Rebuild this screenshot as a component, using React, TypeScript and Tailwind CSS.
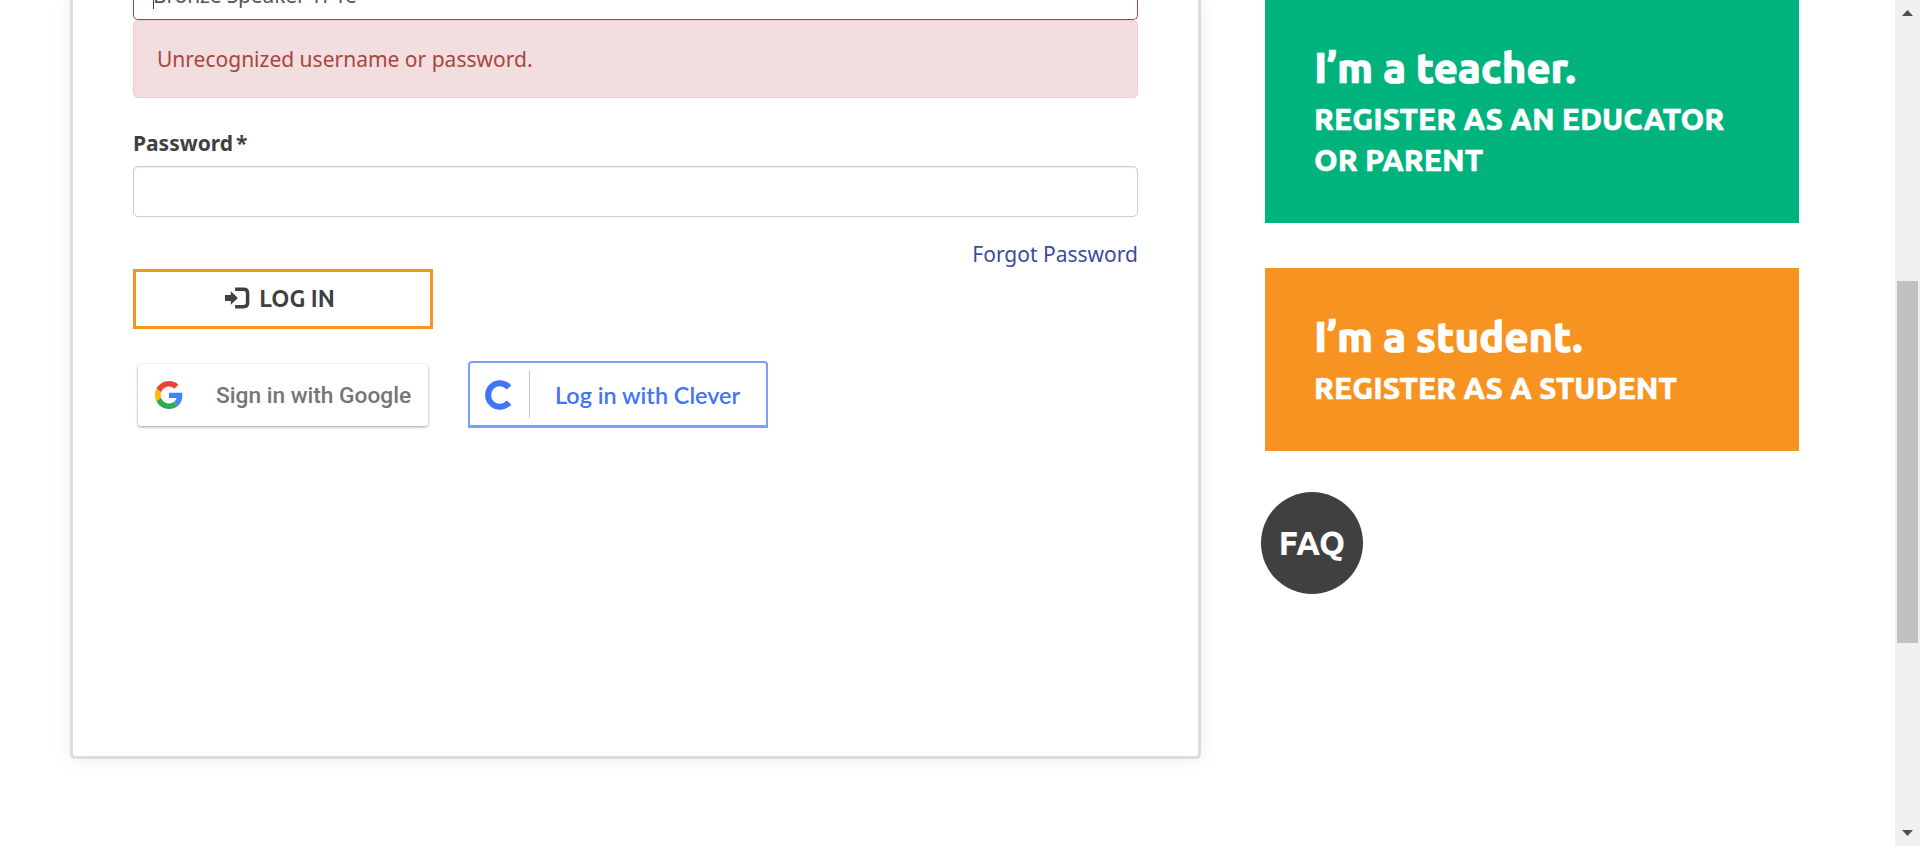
import React from "react";

const ubuntu = "font-['Ubuntu','Noto_Sans',sans-serif]";

function Title({ children }: { children: React.ReactNode }) {
  return <div className="h-[56px] text-[42px] leading-[52px] tracking-[-0.200px] whitespace-nowrap [-webkit-text-stroke:0.7px_white]">{children}</div>;
}

function Line({ children }: { children: React.ReactNode }) {
  return <div className="h-[41px] text-[30px] leading-[42px] whitespace-nowrap [-webkit-text-stroke:0.4px_white]">{children}</div>;
}

function LoginIcon() {
  return (
    <svg width="25" height="22" viewBox="0 0 26 22" className="mr-[9px] mb-[2px]">
      <path d="M0 8h6V4l7.500 7-7.500 7v-4H0z" fill="#404040" />
      <path d="M10.500 2h9q4 0 4 4v10q0 4-4 4h-9" fill="none" stroke="#404040" strokeWidth="3.600" />
    </svg>
  );
}

function GoogleIcon() {
  return (
    <svg width="28" height="28" viewBox="0 0 48 48">
      <path fill="#EA4335" d="M24 9.500c3.540 0 6.710 1.220 9.210 3.600l6.850-6.850C35.900 2.380 30.470 0 24 0 14.620 0 6.510 5.380 2.560 13.220l7.980 6.190C12.430 13.720 17.740 9.500 24 9.500z" />
      <path fill="#4285F4" d="M46.980 24.550c0-1.570-.15-3.090-.38-4.550H24v9.020h12.940c-.58 2.960-2.260 5.480-4.780 7.180l7.730 6c4.510-4.180 7.090-10.360 7.090-17.650z" />
      <path fill="#FBBC05" d="M10.530 28.590c-.48-1.450-.76-2.990-.76-4.590s.27-3.140.76-4.590l-7.980-6.190C.92 16.460 0 20.120 0 24c0 3.880.92 7.540 2.560 10.780l7.970-6.190z" />
      <path fill="#34A853" d="M24 48c6.480 0 11.930-2.130 15.890-5.810l-7.730-6c-2.150 1.450-4.920 2.300-8.160 2.300-6.260 0-11.570-4.220-13.470-9.910l-7.980 6.190C6.510 42.620 14.620 48 24 48z" />
    </svg>
  );
}

export default function App() {
  return (
    <div className="flex h-[846px] w-[1920px] overflow-hidden bg-white font-['Noto_Sans',sans-serif] text-[21px] text-[#404040]">
      <main className="flex h-full w-[1895px] items-start pl-[70px]">
        <section className="h-[759px] w-[1131px] shrink-0 rounded-b-[5px] border-[3px] border-t-0 border-[#dcdcdc] px-[60px] shadow-[0_0_20px_rgba(0,0,0,0.08)]">
          <div className="flex h-[20px] items-end overflow-hidden rounded-b-[5px] border border-t-0 border-[#a94442] pl-[19px]">
            <div className="mb-[10px] h-[30px] w-px bg-[#404040]" />
            <div className="mb-[9px] -ml-[1px] h-[30px] leading-[30px] tracking-[-0.150px] whitespace-pre text-[#555]">Bronze Speaker TPTe</div>
          </div>
          <div className="flex h-[78px] items-center rounded-[5px] border border-[#ebccd1] bg-[#f2dede] pt-[2px] pl-[23px] text-[#a94442]">
            Unrecognized username or password.
          </div>
          <label className="mt-[30px] block h-[38px] leading-[30px] font-bold">
            Password<span className="ml-[3px]">*</span>
          </label>
          <div className="h-[51px] rounded-[5px] border border-[#ccc] shadow-[inset_0_1px_1px_rgba(0,0,0,0.075)]" />
          <a className="mt-[22px] block h-[30px] text-right leading-[30px] text-[#3f4a9a]">Forgot Password</a>
          <button className={`${ubuntu} flex h-[60px] w-[300px] items-center justify-center border-[3px] border-[#f79320] pr-[6px] text-[23px] font-bold`}>
            <LoginIcon />
            <span>LOG IN</span>
          </button>
          <div className="mt-[32px] flex">
            <div className="mt-[3px] ml-[5px] flex h-[62px] w-[290px] items-center rounded-[3px] pl-[17px] font-['Roboto',sans-serif] text-[22.700px] font-medium text-[#757575] shadow-[0_1px_3px_rgba(0,0,0,0.4)]">
              <GoogleIcon />
              <span className="mt-[2px] ml-[33px] whitespace-nowrap">Sign in with Google</span>
            </div>
            <div className="ml-[40px] flex h-[67px] w-[300px] items-center rounded-t-[4px] border-2 border-b-[3px] border-[#7c9ff8] pl-[15px] text-[#4274f6]">
              <svg width="27" height="30" viewBox="0 0 27 30" className="mt-px">
                <path d="M24 7.500A11.800 11.800 0 1 0 24 22.500" fill="none" stroke="#4274f6" strokeWidth="6" />
              </svg>
              <div className="ml-[17px] h-[48px] w-px bg-[#b3c7fb]" />
              <span className="mt-[4px] ml-[25px] font-['Lato',sans-serif] text-[23.400px] font-semibold whitespace-nowrap">Log in with Clever</span>
            </div>
          </div>
        </section>

        <aside className={`${ubuntu} ml-[64px] w-[534px] shrink-0 font-black text-white`}>
          <div className="h-[223px] bg-[#00b37d] pt-[42px] pl-[49px]">
            <Title>I’m a teacher.</Title>
            <Line>REGISTER AS AN EDUCATOR</Line>
            <Line>OR PARENT</Line>
          </div>
          <div className="mt-[45px] h-[183px] bg-[#f79320] pt-[43px] pl-[49px]">
            <Title>I’m a student.</Title>
            <Line>REGISTER AS A STUDENT</Line>
          </div>
          <div className="mt-[41px] -ml-[4px] flex h-[102px] w-[102px] items-center justify-center rounded-full bg-[#404040] text-[33px]">
            <span>FAQ</span>
          </div>
        </aside>
      </main>
      <div className="flex h-full w-[25px] flex-col items-center bg-[#f0f0f0]">
        <svg width="11" height="6" viewBox="0 0 11 6" className="mt-[10px] shrink-0"><path d="M5.500 0L11 6H0z" fill="#505050" /></svg>
        <div className="mt-[265px] h-[362px] w-[21px] shrink-0 bg-[#c1c1c1]" />
        <svg width="11" height="6" viewBox="0 0 11 6" className="mt-[187px] shrink-0"><path d="M0 0h11L5.500 6z" fill="#505050" /></svg>
      </div>
    </div>
  );
}
